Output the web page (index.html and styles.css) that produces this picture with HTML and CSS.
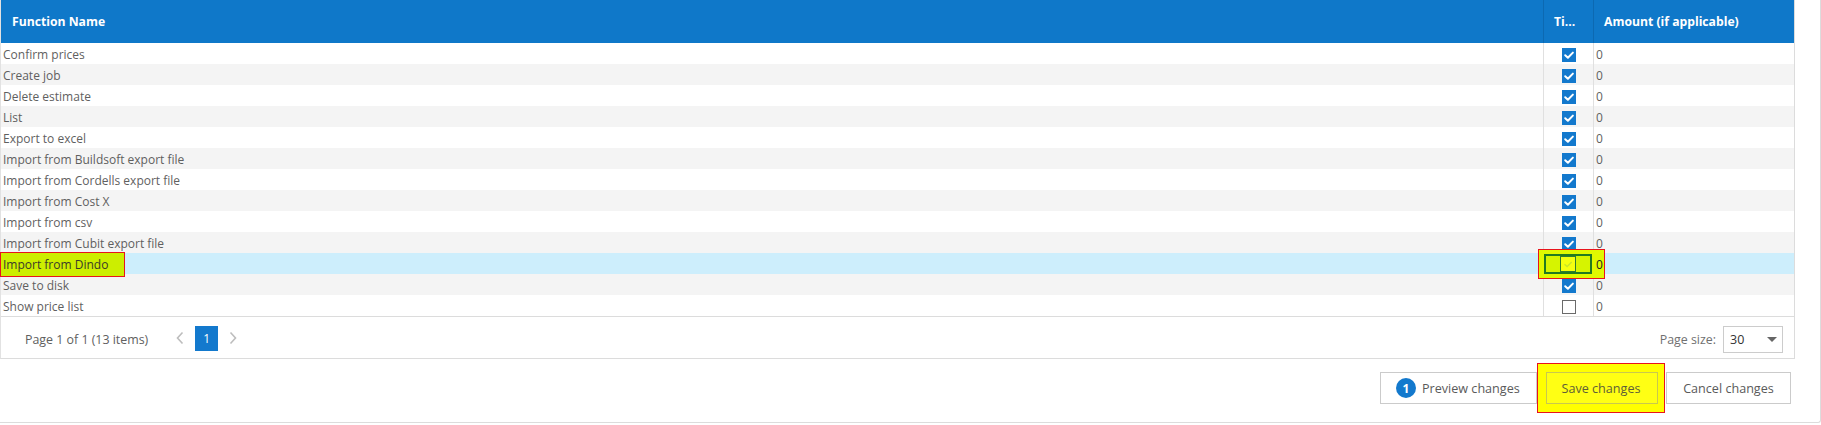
FILE: index.html
```html
<!DOCTYPE html>
<html>
<head>
<meta charset="utf-8">
<link rel="stylesheet" href="styles.css">
</head>
<body>
<div class="panel">
  <div class="grid">
    <div class="row head">
      <div class="cell c-name">Function Name</div>
      <div class="cell c-tick">Ti...</div>
      <div class="cell c-amt">Amount (if applicable)</div>
    </div>
    <div class="row"><div class="cell c-name">Confirm prices</div><div class="cell c-tick"><span class="cb on"><svg viewBox="0 0 14 14"><path d="M3.2 7.2 L5.9 9.8 L10.9 4.6" /></svg></span></div><div class="cell c-amt">0</div></div>
    <div class="row alt"><div class="cell c-name">Create job</div><div class="cell c-tick"><span class="cb on"><svg viewBox="0 0 14 14"><path d="M3.2 7.2 L5.9 9.8 L10.9 4.6" /></svg></span></div><div class="cell c-amt">0</div></div>
    <div class="row"><div class="cell c-name">Delete estimate</div><div class="cell c-tick"><span class="cb on"><svg viewBox="0 0 14 14"><path d="M3.2 7.2 L5.9 9.8 L10.9 4.6" /></svg></span></div><div class="cell c-amt">0</div></div>
    <div class="row alt"><div class="cell c-name">List</div><div class="cell c-tick"><span class="cb on"><svg viewBox="0 0 14 14"><path d="M3.2 7.2 L5.9 9.8 L10.9 4.6" /></svg></span></div><div class="cell c-amt">0</div></div>
    <div class="row"><div class="cell c-name">Export to excel</div><div class="cell c-tick"><span class="cb on"><svg viewBox="0 0 14 14"><path d="M3.2 7.2 L5.9 9.8 L10.9 4.6" /></svg></span></div><div class="cell c-amt">0</div></div>
    <div class="row alt"><div class="cell c-name">Import from Buildsoft export file</div><div class="cell c-tick"><span class="cb on"><svg viewBox="0 0 14 14"><path d="M3.2 7.2 L5.9 9.8 L10.9 4.6" /></svg></span></div><div class="cell c-amt">0</div></div>
    <div class="row"><div class="cell c-name">Import from Cordells export file</div><div class="cell c-tick"><span class="cb on"><svg viewBox="0 0 14 14"><path d="M3.2 7.2 L5.9 9.8 L10.9 4.6" /></svg></span></div><div class="cell c-amt">0</div></div>
    <div class="row alt"><div class="cell c-name">Import from Cost X</div><div class="cell c-tick"><span class="cb on"><svg viewBox="0 0 14 14"><path d="M3.2 7.2 L5.9 9.8 L10.9 4.6" /></svg></span></div><div class="cell c-amt">0</div></div>
    <div class="row"><div class="cell c-name">Import from csv</div><div class="cell c-tick"><span class="cb on"><svg viewBox="0 0 14 14"><path d="M3.2 7.2 L5.9 9.8 L10.9 4.6" /></svg></span></div><div class="cell c-amt">0</div></div>
    <div class="row alt"><div class="cell c-name">Import from Cubit export file</div><div class="cell c-tick"><span class="cb on"><svg viewBox="0 0 14 14"><path d="M3.2 7.2 L5.9 9.8 L10.9 4.6" /></svg></span></div><div class="cell c-amt">0</div></div>
    <div class="row sel">
      <div class="cell c-name"><span class="mark-name"></span><span class="over-text">Import from Dindo</span></div>
      <div class="cell c-tick">
        <span class="mark-tick"><span class="mark-inner"><span class="cb hl"><svg viewBox="0 0 16 16"><path d="M4 8.2 L7 11 L12.2 5.6" /></svg></span></span></span>
      </div>
      <div class="cell c-amt"><span class="over-text dark">0</span></div>
    </div>
    <div class="row alt"><div class="cell c-name">Save to disk</div><div class="cell c-tick"><span class="cb on"><svg viewBox="0 0 14 14"><path d="M3.2 7.2 L5.9 9.8 L10.9 4.6" /></svg></span></div><div class="cell c-amt">0</div></div>
    <div class="row"><div class="cell c-name">Show price list</div><div class="cell c-tick"><span class="cb off"></span></div><div class="cell c-amt">0</div></div>

    <div class="pager">
      <div class="pager-left">
        <span class="pager-info">Page 1 of 1 (13 items)</span>
        <span class="chev"><svg viewBox="0 0 10 14"><path d="M7.5 1.5 L2.5 7 L7.5 12.5" /></svg></span>
        <span class="page-num">1</span>
        <span class="chev"><svg viewBox="0 0 10 14"><path d="M2.5 1.5 L7.5 7 L2.5 12.5" /></svg></span>
      </div>
      <div class="pager-right">
        <span class="ps-label">Page size:</span>
        <span class="ps-select"><span>30</span><svg class="caret" viewBox="0 0 10 5"><path d="M0 0 H10 L5 5 Z" /></svg></span>
      </div>
    </div>
  </div>

  <div class="actions">
    <button class="btn"><span class="badge">1</span>Preview changes</button>
    <span class="save-mark"><button class="btn save">Save changes</button></span>
    <button class="btn">Cancel changes</button>
  </div>
</div>
</body>
</html>
```

FILE: styles.css
```css
* { box-sizing: border-box; }
html, body { margin: 0; padding: 0; background: #fff; }
body {
  font-family: "Open Sans", "Noto Sans", "Liberation Sans", sans-serif;
  font-size: 12px;
  color: #5f5f5f;
  width: 1821px;
  height: 425px;
  overflow: hidden;
}
.panel {
  width: 1821px;
  height: 423px;
  border-right: 1px solid #dcdcdc;
  border-bottom: 1px solid #dcdcdc;
  border-bottom-right-radius: 3px;
}
.grid {
  width: 1795px;
  border-left: 1px solid #e2e2e2;
  border-right: 1px solid #dcdcdc;
  border-bottom: 1px solid #dcdcdc;
}
.row {
  display: grid;
  grid-template-columns: 1542px 50px 1fr;
  height: 21px;
  background: #fff;
}
.row.alt { background: #f4f4f4; }
.row.sel { background: #cdeefc; }
.cell {
  display: flex;
  align-items: center;
  padding-left: 2px;
  padding-top: 1px;
  white-space: nowrap;
  overflow: visible;
  position: relative;
}
.c-tick {
  border-left: 1px solid #e0e0e0;
  justify-content: center;
  padding-left: 0;
  padding-top: 0;
}
.c-amt { border-left: 1px solid #e0e0e0; }

.row.head {
  height: 43px;
  background: #0f78c9;
  color: #fff;
  font-weight: 700;
  font-size: 12.2px;
}
.row.head .cell { padding-left: 11px; padding-top: 0; }
.row.head .c-tick { border-left: 1px solid #0c69b2; justify-content: flex-start; padding-left: 10px; }
.row.head .c-amt { border-left: 1px solid #0c69b2; padding-left: 10px; }

.cb {
  width: 14px;
  height: 14px;
  display: inline-block;
  position: relative;
  top: 1px;
}
.cb svg { display: block; width: 100%; height: 100%; }
.cb.on { background: #1379cd; }
.cb.on path { fill: none; stroke: #fff; stroke-width: 2; stroke-linecap: round; stroke-linejoin: round; }
.cb.off { background: #fff; border: 1px solid #6a6a6a; }

/* annotation overlays */
.mark-name {
  position: absolute;
  left: -1px;
  top: -1px;
  width: 125px;
  height: 25px;
  background: #ccee00;
  border: 1px solid #e8141c;
  z-index: 1;
}
.over-text { position: relative; z-index: 3; color: #3a3a2a; }
.over-text.dark { color: #222; }
.mark-tick {
  position: absolute;
  left: -6px;
  top: -4px;
  width: 67px;
  height: 30px;
  background: #e0f900;
  border: 1px solid #e8141c;
  z-index: 2;
  display: flex;
  align-items: center;
  padding-left: 5px;
}
.mark-inner {
  width: 48px;
  height: 20px;
  border: 2px solid #217a21;
  background: #d6f400;
  display: flex;
  align-items: center;
  justify-content: center;
}
.cb.hl {
  width: 16px;
  height: 16px;
  top: 0;
  background: #f4ff10;
  border: 1px solid #2f7a2f;
}
.cb.hl path { fill: none; stroke: #c4e62a; stroke-width: 1.6; }

/* pager */
.pager {
  height: 42px;
  border-top: 1px solid #dcdcdc;
  display: flex;
  align-items: center;
  justify-content: space-between;
  padding: 0 11px 0 24px;
}
.pager-left { display: flex; align-items: center; }
.pager-info { color: #606060; margin-right: 27px; padding-top: 3px; font-size: 12.4px; }
.chev { width: 10px; height: 14px; display: inline-block; }
.chev svg { width: 10px; height: 14px; display: block; }
.chev path { fill: none; stroke: #bdbdbd; stroke-width: 1.6; }
.page-num {
  width: 23px;
  height: 25px;
  background: #1379cd;
  color: #fff;
  display: flex;
  align-items: center;
  justify-content: center;
  margin: 0 10px;
  position: relative;
  top: 1px;
}
.pager-right { display: flex; align-items: center; padding-top: 3px; }
.ps-label { color: #707070; margin-right: 7px; font-size: 12.4px; }
.ps-select {
  width: 60px;
  height: 27px;
  border: 1px solid #cccccc;
  display: flex;
  align-items: center;
  justify-content: space-between;
  padding: 0 5px 0 6px;
  color: #333;
  font-size: 12.5px;
}
.caret { width: 10px; height: 5px; margin-top: 1px; }
.caret path { fill: #666; }

/* action buttons */
.actions {
  display: flex;
  justify-content: flex-end;
  align-items: center;
  padding: 13px 29px 0 0;
  height: 63px;
}
.btn {
  font-family: inherit;
  font-size: 12.6px;
  height: 32px;
  border: 1px solid #cbcbcb;
  background: #fff;
  color: #5a5a5a;
  padding: 0 16px;
  display: inline-flex;
  align-items: center;
  align-self: flex-start;
  margin: 0;
}
.btn:first-child { width: 157px; padding-left: 15px; }
.btn:last-child { width: 125px; margin-left: 1px; justify-content: center; }
.badge {
  width: 20px;
  height: 20px;
  border-radius: 50%;
  background: #1379cd;
  color: #fff;
  font-weight: 700;
  font-size: 12px;
  display: inline-flex;
  align-items: center;
  justify-content: center;
  margin-right: 6px;
}
.save-mark {
  width: 128px;
  height: 50px;
  margin-top: -9px;
  align-self: flex-start;
  background: #ffff00;
  border: 1px solid #e8141c;
  display: flex;
  align-items: center;
  justify-content: center;
}
.btn.save {
  width: 112px;
  justify-content: center;
  background: #ffff14;
  border: 1px solid #c9c84e;
  color: #5e5e38;
  align-self: center;
}
```
